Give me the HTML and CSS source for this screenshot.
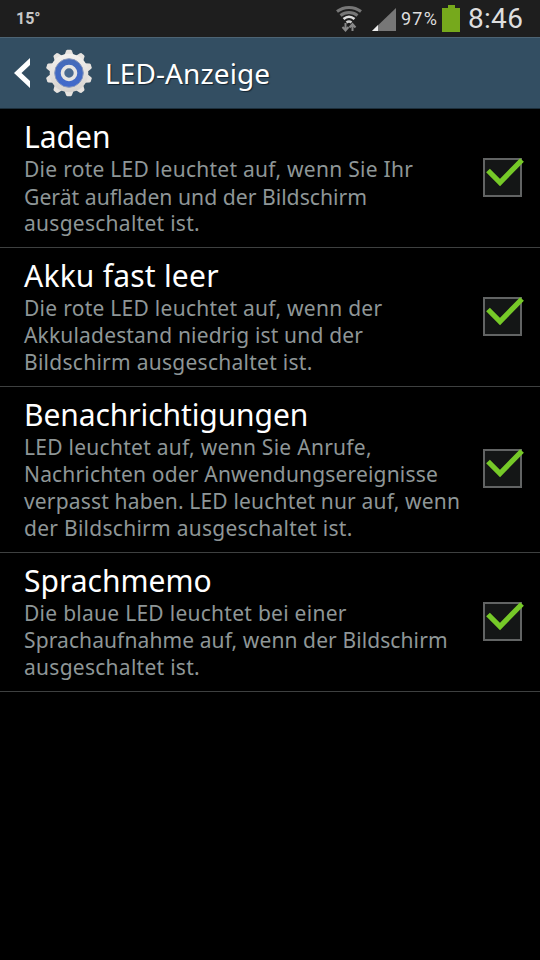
FILE: index.html
```html
<!DOCTYPE html>
<html lang="de">
<head>
<meta charset="utf-8">
<title>LED-Anzeige</title>
<link rel="stylesheet" href="styles.css">
</head>
<body>
<svg class="defs" width="0" height="0" aria-hidden="true">
  <symbol id="check" viewBox="0 0 44 44">
    <rect x="2" y="4" width="37" height="37" fill="#141616" stroke="#626464" stroke-width="2"/>
    <path d="M6 15.500 18 27.500 40 5" fill="none" stroke="#76c928" stroke-width="5.300"/>
  </symbol>
</svg>
<div class="status">
  <span class="temp">15°</span>
  <svg class="wifi" width="28" height="28" viewBox="0 0 28 28" fill="none">
    <path d="M1 6.500C8 1 18 1 25 6.500M4.500 10.500C9.500 6.500 16.500 6.500 21.500 10.500" stroke="#777" stroke-width="3"/>
    <path d="M7.500 14Q13 9.500 18.500 14" stroke="#ddd" stroke-width="2.600"/>
    <path d="M10.500 17.500Q13 15.500 15.500 17.500" stroke="#ccc" stroke-width="2.500"/>
    <path d="M9.500 18v7M6.500 22l3 3.500 3-3.500M16.500 26v-7M13.500 22.500l3-3.500 3 3.500" stroke="#888" stroke-width="2"/>
  </svg>
  <svg class="signal" width="24" height="23" viewBox="0 0 24 23"><path d="M0 23 24 0V23Z" fill="#777"/><path d="M0 23 6 17V23Z" fill="#eee"/></svg>
  <span class="percent">97%</span>
  <svg class="battery" width="18" height="27" viewBox="0 0 18 27"><path d="M0 3H6V0H13V3H18V27H0Z" fill="#76a91c"/></svg>
  <span class="clock">8:46</span>
</div>
<header class="bar">
  <svg class="back" width="17" height="30" viewBox="0 0 17 30"><path d="M16 0V7L7.500 15 16 23V30L0 15Z" fill="#fff"/></svg>
  <svg class="gear" width="48" height="48" viewBox="-24 -24 48 48">
    <defs>
      <linearGradient id="metal" x1="0" y1="0" x2="0" y2="1"><stop offset="0" stop-color="#f4f2ef"/><stop offset="1" stop-color="#d6d2ce"/></linearGradient>
      <linearGradient id="blue" x1="0" y1="0" x2="0" y2="1"><stop offset="0" stop-color="#456bb8"/><stop offset="1" stop-color="#4169cd"/></linearGradient>
      <path id="tooth" d="M-4.500-18-2.800-22.500-1.800-23.300H1.800L2.800-22.500 4.500-18Z"/>
    </defs>
    <g fill="#e7e3df">
      <use href="#tooth"/><use href="#tooth" transform="rotate(36)"/><use href="#tooth" transform="rotate(72)"/><use href="#tooth" transform="rotate(108)"/><use href="#tooth" transform="rotate(144)"/><use href="#tooth" transform="rotate(180)"/><use href="#tooth" transform="rotate(216)"/><use href="#tooth" transform="rotate(252)"/><use href="#tooth" transform="rotate(288)"/><use href="#tooth" transform="rotate(324)"/>
    </g>
    <circle r="19.300" fill="url(#metal)"/>
    <circle r="14.300" fill="url(#blue)" stroke="#8898bd" stroke-width="1"/>
    <circle r="6.500" fill="#49698f" stroke="#e6e5e3" stroke-width="3.600"/>
  </svg>
  <h1>LED-Anzeige</h1>
</header>
<main>
  <section class="row">
    <div class="text"><h2>Laden</h2>
      <p><span class="wide">Die rote LED leuchtet auf, wenn Sie Ihr</span> <span class="lig">Gerät aufladen und der Bildschirm</span> <span class="wide">ausgeschaltet ist.</span></p></div>
    <svg class="check"><use href="#check"/></svg>
  </section>
  <section class="row">
    <div class="text"><h2 class="loose">Akku fast leer</h2>
      <p><span class="wide">Die rote LED leuchtet auf, wenn der</span> <span class="mid">Akkuladestand niedrig ist und der</span> <span class="wide">Bildschirm ausgeschaltet ist.</span></p></div>
    <svg class="check"><use href="#check"/></svg>
  </section>
  <section class="row tall">
    <div class="text"><h2 class="tight">Benachrichtigungen</h2>
      <p><span class="wide">LED leuchtet auf, wenn Sie Anrufe,</span> <span class="mid">Nachrichten oder Anwendungsereignisse</span> <span class="mid">verpasst haben. LED leuchtet nur auf, wenn</span> <span class="wide">der Bildschirm ausgeschaltet ist.</span></p></div>
    <svg class="check"><use href="#check"/></svg>
  </section>
  <section class="row">
    <div class="text"><h2>Sprachmemo</h2>
      <p><span class="wide">Die blaue LED leuchtet bei einer</span> <span class="slim">Sprachaufnahme auf, wenn der Bildschirm</span> <span class="wide">ausgeschaltet ist.</span></p></div>
    <svg class="check"><use href="#check"/></svg>
  </section>
</main>
</body>
</html>
```
FILE: styles.css
```css
* { box-sizing: border-box; }
body { margin: 0; width: 540px; height: 960px; overflow: hidden; background: #000; color: #fff; font-family: "Noto Sans", sans-serif; }
.defs { display: block; height: 0; }
h1, h2, p { margin: 0; font-weight: 400; white-space: nowrap; }
.status { height: 38px; display: flex; align-items: center; background: #1e1e1e; color: #dedede; font-family: Roboto, sans-serif; border-bottom: 1px solid #4d6474; padding: 0 16px; }
.temp { font-size: 16px; font-weight: 700; color: #c8c8c8; margin-right: auto; }
.wifi { margin: 0 8px 0 0; }
.signal { margin: 2px 5px 0 0; }
.percent { width: 41px; font-size: 18px; letter-spacing: 1.2px; }
.clock { width: 56px; margin-left: 8px; font-size: 28px; line-height: 36px; letter-spacing: .3px; }
.bar { height: 71px; display: flex; align-items: center; background: #334e62; padding-left: 14px; border-bottom: 1px solid #1d2f3c; }
.gear { margin-left: 14px; }
h1 { margin-left: 12px; font-size: 28px; letter-spacing: .1px; line-height: 36px; text-shadow: 1px 1px 1px #152532; }
.row { height: 139px; display: flex; justify-content: space-between; padding: 9px 14px 0 24px; border-bottom: 1px solid #3e4040; }
.row.tall { height: 166px; }
h2 { font-size: 30px; line-height: 38px; }
.loose { letter-spacing: .22px; }
.tight { letter-spacing: -.09px; }
p { font-size: 21px; line-height: 27px; color: #8e9697; }
p span { display: block; }
.wide { letter-spacing: .27px; }
.mid { letter-spacing: .17px; }
.slim { letter-spacing: .1px; }
.lig { font-size: 21.200px; }
.check { width: 44px; height: 44px; flex: none; margin-top: 37px; }
.tall .check { margin-top: 50px; }
```
